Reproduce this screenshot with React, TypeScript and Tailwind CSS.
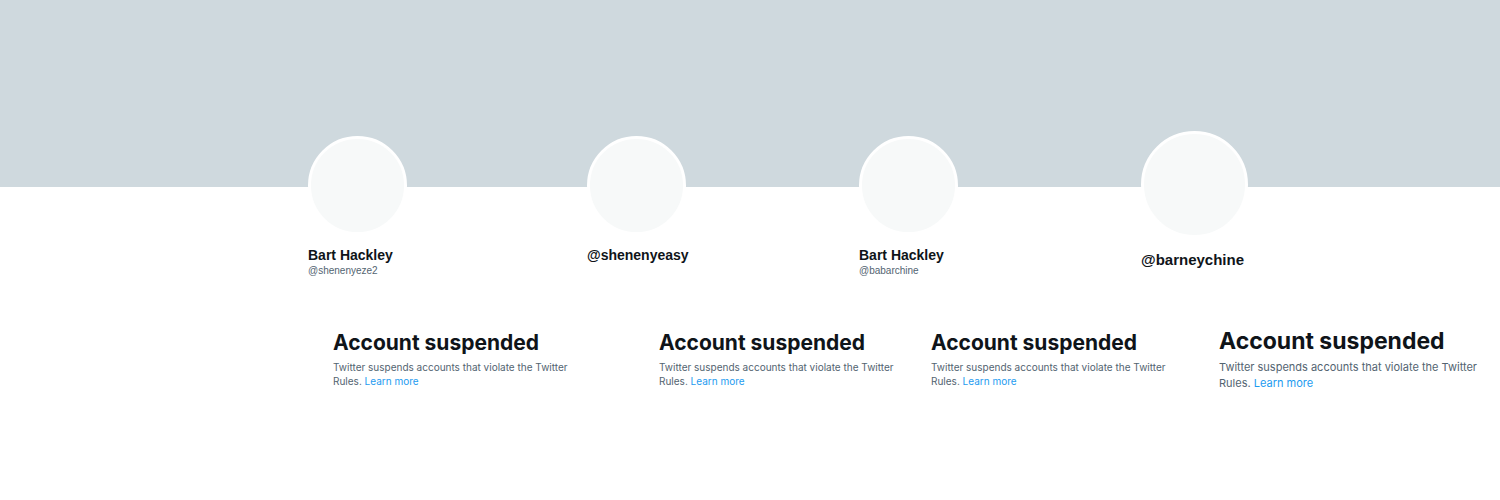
import React from "react";
import clsx from "clsx";

interface Account {
  name: string;
  handle?: string;
  large?: boolean;
}

const accounts: Account[] = [
  { name: "Bart Hackley", handle: "@shenenyeze2" },
  { name: "@shenenyeasy" },
  { name: "Bart Hackley", handle: "@babarchine" },
  { name: "@barneychine", large: true },
];

const Profile = ({ name, handle, large }: Account) => (
  <div className={clsx(large ? "-mt-14" : "-mt-[51px]")}>
    <div
      className={clsx(
        "rounded-full border-3 border-white bg-[#f7f9f9]",
        large ? "size-[107px]" : "size-[99px]"
      )}
    />
    <h2
      className={clsx(
        "font-bold leading-5 text-[#0f1419]",
        large ? "mt-3 text-[15px]" : "mt-2.5 text-[14px]"
      )}
    >
      {name}
    </h2>
    {handle && <p className="text-[10px] leading-3 text-[#536471]">{handle}</p>}
  </div>
);

const SuspendedNotice = ({ large }: { large?: boolean }) => (
  <div className={clsx("font-['Inter',sans-serif]", large ? "w-65" : "w-60")}>
    <h3
      className={clsx(
        "whitespace-nowrap font-bold leading-6 text-[#0f1419]",
        large ? "text-[23px]" : "mt-0.5 text-[21px]"
      )}
    >
      Account suspended
    </h3>
    <p
      className={clsx(
        "text-[#536471]",
        large ? "mt-1.5 text-[11px] leading-4" : "mt-[5px] text-[10px] leading-3.5"
      )}
    >
      Twitter suspends accounts that violate the Twitter{" "}
      <span className="whitespace-nowrap">
        Rules.{" "}
        <a href="#" className="text-[#1d9bf0]">
          Learn more
        </a>
      </span>
    </p>
  </div>
);

const App = () => {
  return (
    <div className="min-h-screen bg-white font-['Liberation_Sans',sans-serif]">
      <div className="h-[187px] bg-[#cfd9de]" />

      <div className="grid h-[142px] grid-cols-[308fr_279fr_272fr_282fr_359fr]">
        <div />
        {accounts.map((account, index) => (
          <Profile key={index} {...account} />
        ))}
      </div>

      <div className="grid grid-cols-[333fr_326fr_272fr_288fr_281fr]">
        <div />
        {accounts.map((account, index) => (
          <SuspendedNotice key={index} large={account.large} />
        ))}
      </div>
    </div>
  );
};

export default App;
